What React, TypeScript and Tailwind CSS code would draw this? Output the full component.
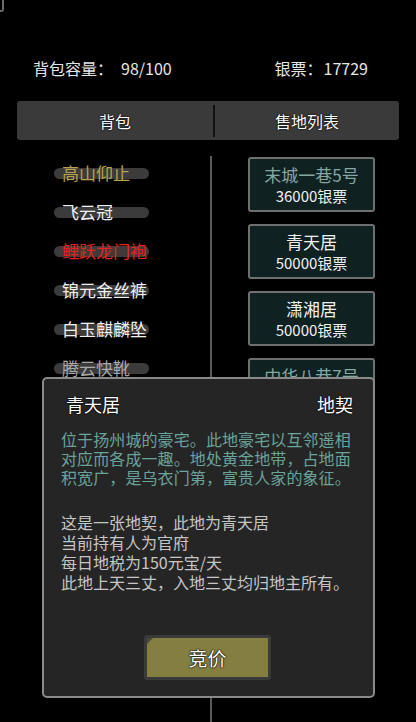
import React from "react";

const font = { fontFamily: '"Noto Sans CJK SC", "Noto Sans", sans-serif' };

const items = [
  { name: "高山仰止", color: "text-[#b9a24a]" },
  { name: "飞云冠", color: "text-[#f0f0f0]" },
  { name: "鲤跃龙门袍", color: "text-[#e8201e]" },
  { name: "锦元金丝裤", color: "text-[#f0f0f0]" },
  { name: "白玉麒麟坠", color: "text-[#f0f0f0]" },
  { name: "腾云快靴", color: "text-[#a8a8a8]" },
];

const lands = [
  { name: "末城一巷5号", price: "36000银票", nameColor: "text-[#86a79f]" },
  { name: "青天居", price: "50000银票", nameColor: "text-[#f0f0f0]" },
  { name: "潇湘居", price: "50000银票", nameColor: "text-[#f0f0f0]" },
  { name: "中华八巷7号", price: "30000银票", nameColor: "text-[#86a79f]" },
];

export default function App() {
  return (
    <div
      className="relative w-[416px] h-[722px] bg-black overflow-hidden"
      style={font}
    >
      {/* corner fragment */}
      <div className="absolute left-0 top-0 w-[4px] h-[12px] border-r-2 border-b-2 border-[#6a6a6a] rounded-br-[3px]" />

      {/* header */}
      <div className="flex items-center h-[20px] mt-[58px] text-[16px] text-[#e6e6e6] leading-none">
        <div className="ml-[33px] flex">
          <span>背包容量：</span>
          <span className="ml-[8px]">98/100</span>
        </div>
        <div className="ml-auto mr-[48px] flex">
          <span>银票：</span>
          <span className="ml-[1px]">17729</span>
        </div>
      </div>

      {/* tabs */}
      <div className="mx-[17px] mt-[23px] h-[39px] flex items-center bg-[#3a3a3a] rounded-[3px] text-[16px] text-white [text-shadow:0_0_2px_#000,0_0_1px_#000]">
        <div className="w-[196px] text-center">背包</div>
        <div className="w-[2px] h-[32px] bg-[#111]" />
        <div className="flex-1 text-center">售地列表</div>
      </div>

      {/* content */}
      <div className="flex mt-[13px]">
        <div className="w-[210px] flex flex-col">
          {items.map((it) => (
            <div key={it.name} className="relative h-[39px] flex items-center">
              <div className="absolute left-[54px] w-[95px] h-[11px] top-[15px] rounded-full bg-[#3b3b3b]" />
              <span className={`relative ml-[62px] text-[17px] leading-[20px] ${it.color}`}>
                {it.name}
              </span>
            </div>
          ))}
        </div>
        <div className="w-[2px] h-[600px] mt-[3px] bg-[#5a5a5a]" />
        <div className="ml-[36px] pt-[4px] flex flex-col gap-[12px]">
          {lands.map((l) => (
            <div
              key={l.name}
              className="w-[127px] h-[55px] border-2 border-[#6f6f6f] rounded-[3px] bg-[#0f2121] flex flex-col items-center justify-center leading-none"
            >
              <span className={`text-[17px] ${l.nameColor}`}>{l.name}</span>
              <span className="text-[15px] text-[#f0f0f0] mt-[5px]">{l.price}</span>
            </div>
          ))}
        </div>
      </div>

      {/* dialog */}
      <div className="absolute left-[42px] top-[377px] w-[333px] h-[321px] bg-[#252525] border-2 border-[#8a8a8a] rounded-[5px] flex flex-col">
        <div className="flex justify-between items-center mt-[16px] ml-[22px] mr-[20px] text-[18px] text-white leading-none [text-shadow:0_0_2px_#000,0_0_1px_#000]">
          <span>青天居</span>
          <span>地契</span>
        </div>
        <div className="mt-[17px] ml-[17px] text-[16px] leading-[19px] tracking-[0.1px] text-[#6aa39a] whitespace-nowrap">
          <div>位于扬州城的豪宅。此地豪宅以互邻遥相</div>
          <div>对应而各成一趣。地处黄金地带，占地面</div>
          <div>积宽广，是乌衣门第，富贵人家的象征。</div>
        </div>
        <div className="mt-[25px] ml-[17px] text-[16px] leading-[20px] text-[#c6c6c6] whitespace-nowrap">
          <div>这是一张地契，此地为青天居</div>
          <div>当前持有人为官府</div>
          <div>每日地税为150元宝/天</div>
          <div>此地上天三丈，入地三丈均归地主所有。</div>
        </div>
        <div className="flex-1" />
        <div className="mb-[16px] self-center ml-[-2px] w-[127px] h-[45px] bg-[#3a3a3a] rounded-[3px] p-[3px]">
          <div className="relative w-full h-full bg-[#847f40] flex items-center justify-center text-[19px] text-white leading-none [text-shadow:0_0_2px_#000,0_0_1px_#000,0_0_1px_#000]">
            <div className="absolute left-0 top-0 w-0 h-0 border-t-[6px] border-r-[6px] border-t-[#4a4a3a] border-r-transparent" />
            竞价
          </div>
        </div>
      </div>
    </div>
  );
}
